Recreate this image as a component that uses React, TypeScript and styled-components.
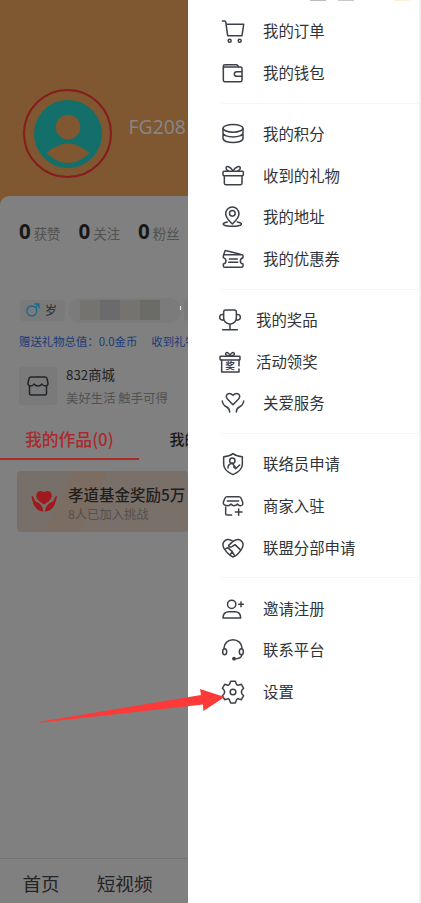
import React from "react";
import styled, { createGlobalStyle } from "styled-components";

const GlobalStyle = createGlobalStyle`
  * { box-sizing: border-box; }
  body {
    margin: 0;
    overflow: hidden;
    font-family: "Noto Sans CJK SC", "Noto Sans", sans-serif;
  }
`;

const Screen = styled.div`
  position: relative;
  display: flex;
  width: 421px;
  height: 903px;
  background: #f0f0f0;
  overflow: hidden;
`;

const Profile = styled.main`
  display: flex;
  flex-direction: column;
  width: 188px;
  height: 903px;
  overflow: hidden;
  white-space: nowrap;
  background: #7f5731;
`;

const Cover = styled.header`
  display: flex;
  flex: none;
  gap: 16.5px;
  height: 196px;
  padding: 89px 0 0 23px;
`;

const Avatar = styled.div`
  display: flex;
  align-items: center;
  justify-content: center;
  flex: none;
  width: 89px;
  height: 89px;
  border: 2px solid #861c1c;
  border-radius: 50%;
`;

const UserName = styled.h1`
  margin: 24px 0 0;
  color: #858585;
  font-family: "Noto Sans", sans-serif;
  font-size: 19.4px;
  font-weight: 400;
  line-height: 27px;
`;

const Sheet = styled.section`
  display: flex;
  flex-direction: column;
  flex: 1;
  background: #808080;
  border-top-left-radius: 9px;
`;

const Stats = styled.div`
  display: flex;
  gap: 18px;
  height: 30px;
  margin: 21px 0 1px 19px;
`;

const Stat = styled.div`
  display: flex;
  align-items: baseline;
  flex: none;
  gap: 3px;
  color: #515151;
  font-size: 13.4px;
  line-height: 28px;
  b { color: #181818; font-family: "Noto Sans", sans-serif; font-size: 20.5px; }
`;

const Tags = styled.div`
  display: flex;
  align-items: center;
  gap: 3px;
  height: 26px;
  margin: 49px 0 0 20px;
`;

const Tag = styled.div`
  display: flex;
  align-items: center;
  flex: none;
  gap: 5px;
  width: 45px;
  height: 21px;
  padding-left: 6px;
  border-radius: 3px;
  background: #7a7a7a;
  color: #262626;
  font-size: 12px;
  line-height: 20px;
`;

const MaskedTag = styled.div`
  display: flex;
  align-items: center;
  flex: none;
  width: 113px;
  height: 25px;
  padding-left: 12px;
  border-radius: 12px;
  background: #7b7b7c;
`;

const MaskCell = styled.span<{ $tone: string }>`
  width: 20px;
  height: 20px;
  background: ${(p) => p.$tone};
`;

const Tick = styled.i`
  width: 1px;
  height: 4px;
  margin-left: 20px;
  margin-top: -4px;
  background: #eee;
`;

const GiftTotals = styled.div`
  display: flex;
  gap: 14px;
  height: 20px;
  margin: 7.5px 0 1px 19px;
  color: #1c3a76;
  font-size: 11.4px;
  line-height: 20px;
`;

const Shop = styled.div`
  display: flex;
  gap: 9px;
  height: 43px;
  margin: 14px 0 0 19px;
`;

const ShopIcon = styled.div`
  display: flex;
  align-items: center;
  justify-content: center;
  width: 38px;
  height: 38px;
  margin-top: 1px;
  border-radius: 3px;
  background: #7a7a7a;
`;

const ShopText = styled.div`
  color: #222;
  font-size: 13.3px;
  line-height: 18px;
  small {
    display: block;
    margin-top: 5px;
    color: #515151;
    font-size: 12.4px;
    line-height: 18px;
  }
`;

const Tabs = styled.div`
  display: flex;
  flex: none;
  height: 45px;
  margin-top: 6px;
`;

const Tab = styled.div<{ $active?: boolean }>`
  flex: none;
  width: 139px;
  height: 45px;
  padding-left: ${(p) => (p.$active ? 25 : 30.5)}px;
  border-bottom: 2px solid ${(p) => (p.$active ? "#a82b2b" : "transparent")};
  color: ${(p) => (p.$active ? "#aa2a2d" : "#181818")};
  font-size: ${(p) => (p.$active ? 16.8 : 15)}px;
  font-weight: 500;
  line-height: 48px;
`;

const Banner = styled.div`
  display: flex;
  flex: none;
  gap: 10px;
  height: 61px;
  margin: 11px 0 0 17px;
  padding: 14px 0 0 14px;
  border-radius: 4px;
  background: linear-gradient(115deg, #776f6a 0 28%, #7b6d62 28% 46%, #79706a 46%);
`;

const BannerIcon = styled.svg`
  flex: none;
  width: 27px;
  height: 24px;
  margin-top: 5px;
  fill: #a0191c;
`;

const BannerText = styled.div`
  color: #211e1c;
  font-size: 15.5px;
  font-weight: 500;
  line-height: 18px;
  small {
    display: block;
    margin-top: 2px;
    color: #55504d;
    font-size: 12.3px;
    font-weight: 400;
    line-height: 18px;
  }
`;

const BottomNav = styled.nav`
  display: flex;
  gap: 37px;
  height: 45px;
  margin-top: auto;
  padding-left: 22.5px;
  border-top: 1px solid #727272;
  color: #242424;
  font-size: 18.6px;
  line-height: 47px;
`;

const Drawer = styled.aside`
  width: 231px;
  height: 903px;
  background: #fff;
`;

const TopSliver = styled.div`
  display: flex;
  gap: 12px;
  height: 10.3px;
  padding-left: 122px;
`;

const SliverMark = styled.i<{ $tint: string }>`
  width: 16px;
  height: 1px;
  background: ${(p) => p.$tint};
`;

const MenuGroup = styled.div`
  margin-left: 33.5px;
  &:not(:last-child) { padding-bottom: 8.8px; border-bottom: 1px solid #f6f6f6; }
  & + & { padding-top: 9.4px; }
`;

const MenuItem = styled.div<{ $shifted?: boolean }>`
  display: flex;
  align-items: center;
  gap: ${(p) => (p.$shifted ? 15.5 : 19.5)}px;
  height: 41.72px;
  margin-left: ${(p) => (p.$shifted ? -3 : 0)}px;
  color: #303338;
  font-size: 15.4px;
  line-height: 24px;
  span { padding-bottom: 2px; }
`;

const LineIcon = styled.svg`
  flex: none;
  width: 22px;
  height: 22px;
  overflow: visible;
  fill: none;
  stroke: #3c4048;
  stroke-width: 4.5;
  stroke-linecap: round;
  stroke-linejoin: round;
  .solid { fill: #3c4048; }
  text { fill: #3c4048; stroke: none; font-size: 29px; font-weight: 700; }
`;

const Arrow = styled.svg`
  position: absolute;
  left: 39px;
  top: 688px;
  width: 187px;
  height: 36px;
`;

const icons: Record<string, React.ReactNode> = {
  cart: <><path d="M1 3h7q3 0 3.5 4L17 47h43l5-34H13" /><circle cx="23" cy="62" r="4.5" /><circle cx="53" cy="62" r="4.5" /></>,
  wallet: <><rect x="4" y="15" width="56" height="44" rx="4" /><path d="M4 18v-5q0-5 5-5h34q5 0 6 7M60 29H44q-7 0-7 7t7 7h16" /></>,
  coins: <><ellipse cx="33" cy="16" rx="30" ry="11.5" /><path d="M3 17v12c0 17 60 17 60 0V17M3 34v12c0 17 60 17 60 0V34" /></>,
  gift: <><rect x="3" y="19" width="61" height="13" rx="3" /><path d="M7 32v23q0 4 4 4h45q4 0 4-4V32M33 18C26 4 12 1 12 9q0 5 7 9M33 18C40 4 55 1 55 9q0 5-7 9" /></>,
  pin: <><path d="M31 54C20 43 11 35 11 23a20 20 0 0 1 40 0c0 12-9 20-20 31Z" /><circle cx="31" cy="22" r="8.5" /><path d="M16 48C-3 51-1 61 31 61S65 51 46 48" /></>,
  coupon: <><path d="M7 20H60q3 0 3 4v5q-8 2-8 10t8 9v6q0 4-4 4H8q-4 0-4-4v-6q8-2 8-9t-8-10v-5q0-4 3-4ZM5 20l4-11q1-2 4-1l42 11M22 33h24M20 43h27" /></>,
  trophy: <><path d="M14 9q0-6 6-6h26q6 0 6 6v18q0 14-19 19Q14 41 14 27ZM14 17Q2 14 2 25q0 9 13 9M52 17q12-3 12 8 0 9-13 9M33 46v15M11 62h44" /></>,
  prize: <><rect x="3" y="16" width="60" height="11" rx="2" /><path d="M8 27v36h52V54M60 44V27M33 16C24 16 17 10 21 6s12 3 12 10ZM33 16c9 0 16-6 12-10S33 9 33 16Z" /><text x="19" y="55">奖</text></>,
  care: <><path d="M33 38 17 22C5 8 22-2 33 10 44-2 61 8 49 22ZM1 27q1 12 13 18 9 5 9 15M65 27q-1 12-13 18-9 5-9 15" /></>,
  shield: <><path d="M33 2q12 9 28 9v23q0 19-28 31Q5 53 5 34V11q16 0 28-9Z" /><circle cx="31" cy="23" r="8" /><path d="M18 45q0-12 13-14l8 10M35 42l6 5 12-11" /></>,
  store: <><path d="M15 5h36q5 0 7 6l4 11q2 10-7 10-6 0-9-5-4 5-10 5-5 0-9-5-4 5-9 5-15 0-14-10L8 11q2-6 7-6ZM16 18h34M11 37v19q0 4 4 4h14M50 42v19M40 51h20" /></>,
  alliance: <><path d="M33 60Q18 53 6 34C-4 15 13 0 33 13 53 0 70 15 60 34 49 52 43 58 33 60ZM33 13 20 25q1 8 10 4l9-6 18 17M8 37l9-5 14 12-7 10M30 43l8 13" /></>,
  invite: <><circle cx="29" cy="19" r="12.5" /><path d="M3 60q0-19 18-19h18q17 0 17 19ZM57 12v14M50 19h14" /></>,
  headset: <><path d="M6 29v-2a27 25 0 0 1 54 0v2M60 47q-3 13-23 13" /><ellipse cx="8" cy="38" rx="6" ry="9" /><ellipse cx="58" cy="38" rx="6" ry="9" /><circle className="solid" cx="36" cy="59" r="3.5" /></>,
  gear: <><path d="M26 1h14l3 8q2 5 8 3l7-2 7 12-5 5q-4 6 0 12l5 5-7 12-7-2q-6-2-8 4l-3 8H26l-3-8q-2-6-8-4l-7 2-7-12 5-5q4-6 0-12l-5-5 7-12 7 2q6 2 8-3Z" /><circle cx="33" cy="33" r="8.5" /></>,
};

type Item = { icon: string; label: string; shifted?: boolean };

const groups: Item[][] = [
  [{ icon: "cart", label: "我的订单" }, { icon: "wallet", label: "我的钱包" }],
  [
    { icon: "coins", label: "我的积分" },
    { icon: "gift", label: "收到的礼物" },
    { icon: "pin", label: "我的地址" },
    { icon: "coupon", label: "我的优惠券" },
  ],
  [
    { icon: "trophy", label: "我的奖品", shifted: true },
    { icon: "prize", label: "活动领奖", shifted: true },
    { icon: "care", label: "关爱服务" },
  ],
  [
    { icon: "shield", label: "联络员申请" },
    { icon: "store", label: "商家入驻" },
    { icon: "alliance", label: "联盟分部申请" },
  ],
  [
    { icon: "invite", label: "邀请注册" },
    { icon: "headset", label: "联系平台" },
    { icon: "gear", label: "设置" },
  ],
];

export default function App() {
  return (
    <Screen>
      <GlobalStyle />
      <Profile>
        <Cover>
          <Avatar>
            <svg width="68" height="68" viewBox="0 0 68 68">
              <circle cx="34" cy="34" r="34" fill="#136f6a" />
              <circle cx="34" cy="27" r="12.3" fill="#7f5731" />
              <path d="M12.5 53Q34 34 55.500 53Q34 73 12.500 53Z" fill="#7f5731" />
            </svg>
          </Avatar>
          <UserName>FG208</UserName>
        </Cover>
        <Sheet>
          <Stats>
            <Stat><b>0</b>获赞</Stat>
            <Stat><b>0</b>关注</Stat>
            <Stat><b>0</b>粉丝</Stat>
          </Stats>
          <Tags>
            <Tag>
              <svg width="14" height="14" viewBox="0 0 14 14" fill="none" stroke="#17698f" strokeWidth="1.3">
                <circle cx="5.800" cy="8" r="5" />
                <path d="M9.400 4.500 13 1M8.500 1H13V5.500" />
              </svg>
              岁
            </Tag>
            <MaskedTag>
              <MaskCell $tone="#747370" />
              <MaskCell $tone="#6b6b6d" />
              <MaskCell $tone="#747370" />
              <MaskCell $tone="#6b6b68" />
              <Tick />
            </MaskedTag>
            <Tag />
          </Tags>
          <GiftTotals><span>赠送礼物总值：0.0金币</span><span>收到礼物</span></GiftTotals>
          <Shop>
            <ShopIcon>
              <svg width="22" height="20" viewBox="0 0 22 20" fill="none" stroke="#20242b" strokeWidth="1.5" strokeLinejoin="round">
                <path d="M4 1h14q1.500 0 2 1.500L21 7q0 3-2.500 3T15 8q-1.500 2-4 2T7 8q-1 2-3.500 2T1 7l1-4.500Q2.500 1 4 1ZM2.500 10v7.500Q2.500 19 4 19h14q1.500 0 1.500-1.500V10" />
              </svg>
            </ShopIcon>
            <ShopText>832商城<small>美好生活 触手可得</small></ShopText>
          </Shop>
          <Tabs><Tab $active>我的作品(0)</Tab><Tab>我的</Tab></Tabs>
          <Banner>
            <BannerIcon viewBox="0 0 27 24">
              <path d="M13 14.500Q5 10 5.200 5.500 5.500 1 9.500 1 11 1 13 2.300 15 1 16.500 1 20.500 1 20.800 5.500 21 10 13 14.500Z" />
              <path d="M.5 6Q1.500 5.500 2.200 7L4.500 11.500Q11.500 13.500 12.300 21.500 2.500 21 .5 6ZM26 6Q25 5.500 24.300 7L22 11.500Q15 13.500 13.900 21.500 24 21 26 6Z" />
            </BannerIcon>
            <BannerText>孝道基金奖励5万<small>8人已加入挑战</small></BannerText>
          </Banner>
          <BottomNav><span>首页</span><span>短视频</span></BottomNav>
        </Sheet>
      </Profile>
      <Drawer>
        <TopSliver>
          <SliverMark $tint="#bbb" />
          <SliverMark $tint="#c8c8c8" />
          <SliverMark $tint="#fff" />
          <SliverMark $tint="#fbefd8" />
        </TopSliver>
        {groups.map((group, i) => (
          <MenuGroup key={i}>
            {group.map((item) => (
              <MenuItem key={item.icon} $shifted={item.shifted}>
                <LineIcon viewBox="0 0 66 66">{icons[item.icon]}</LineIcon>
                <span>{item.label}</span>
              </MenuItem>
            ))}
          </MenuGroup>
        ))}
      </Drawer>
      <Arrow viewBox="0 0 187 36">
        <path d="M185.700 9 161 1l1 6L.5 33.700v1L164 16.500l.3 6.500Z" fill="#fd3a38" />
      </Arrow>
    </Screen>
  );
}
